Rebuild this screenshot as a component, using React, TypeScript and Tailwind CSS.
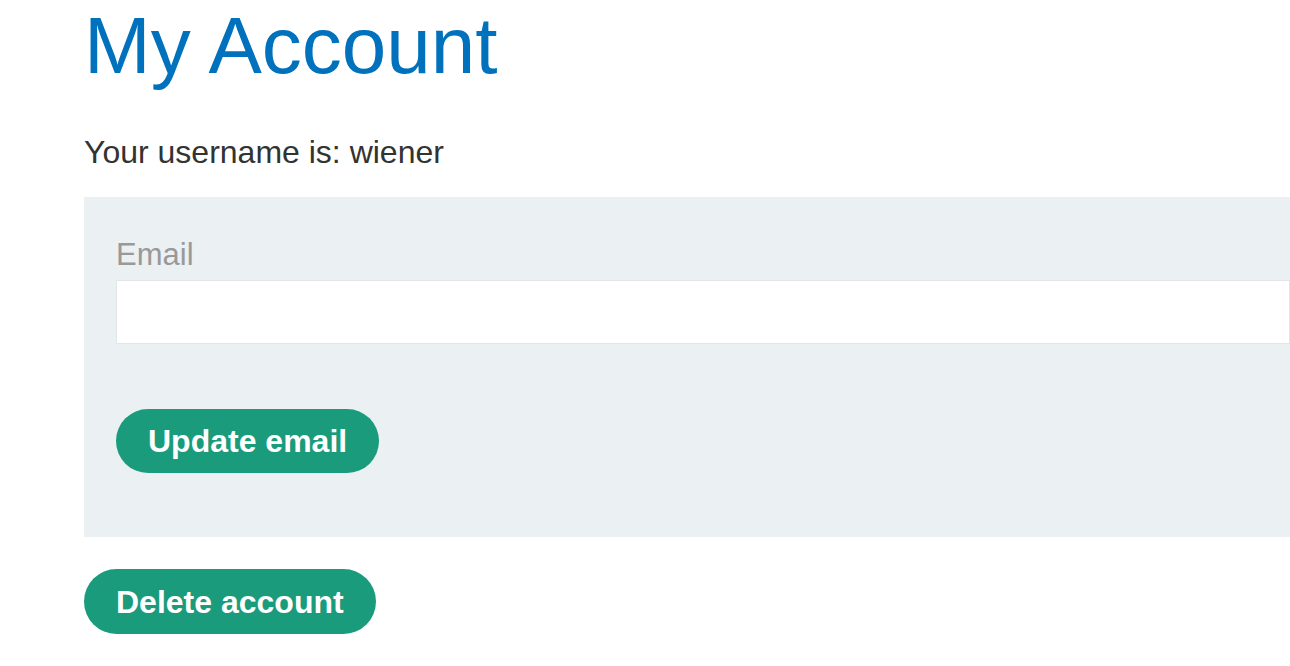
export default function App() {
  return (
    <div className="min-h-screen overflow-hidden bg-white pl-[84px] font-['Liberation_Sans',Arial,sans-serif] text-[#333332]">
      <h1 className="mt-[6px] text-[80px] font-normal leading-none text-[#0071bc]">My Account</h1>

      <p className="mt-[48px] text-[32px] leading-[1.15]">Your username is: wiener</p>

      <form className="mt-[26px] bg-[#ebf0f2] pb-[64px] pl-[32px] pt-[40px]" onSubmit={(e) => e.preventDefault()}>
        <label className="block text-[31px] leading-[1.15] text-[#999999]">Email</label>
        <input
          type="email"
          name="email"
          className="mt-[8px] block h-[64px] w-full border border-[#e3e6e8] bg-white px-3 text-[31px] outline-none"
        />
        <button
          type="submit"
          className="mt-[65px] flex h-[64px] items-center rounded-full bg-[#1a9b7b] px-[32px] text-[32px] font-bold text-white"
        >
          Update email
        </button>
      </form>

      <button
        type="button"
        className="mt-[32px] flex h-[65px] items-center rounded-full bg-[#1a9b7b] px-[32px] text-[32px] font-bold text-white"
      >
        Delete account
      </button>
    </div>
  );
}
